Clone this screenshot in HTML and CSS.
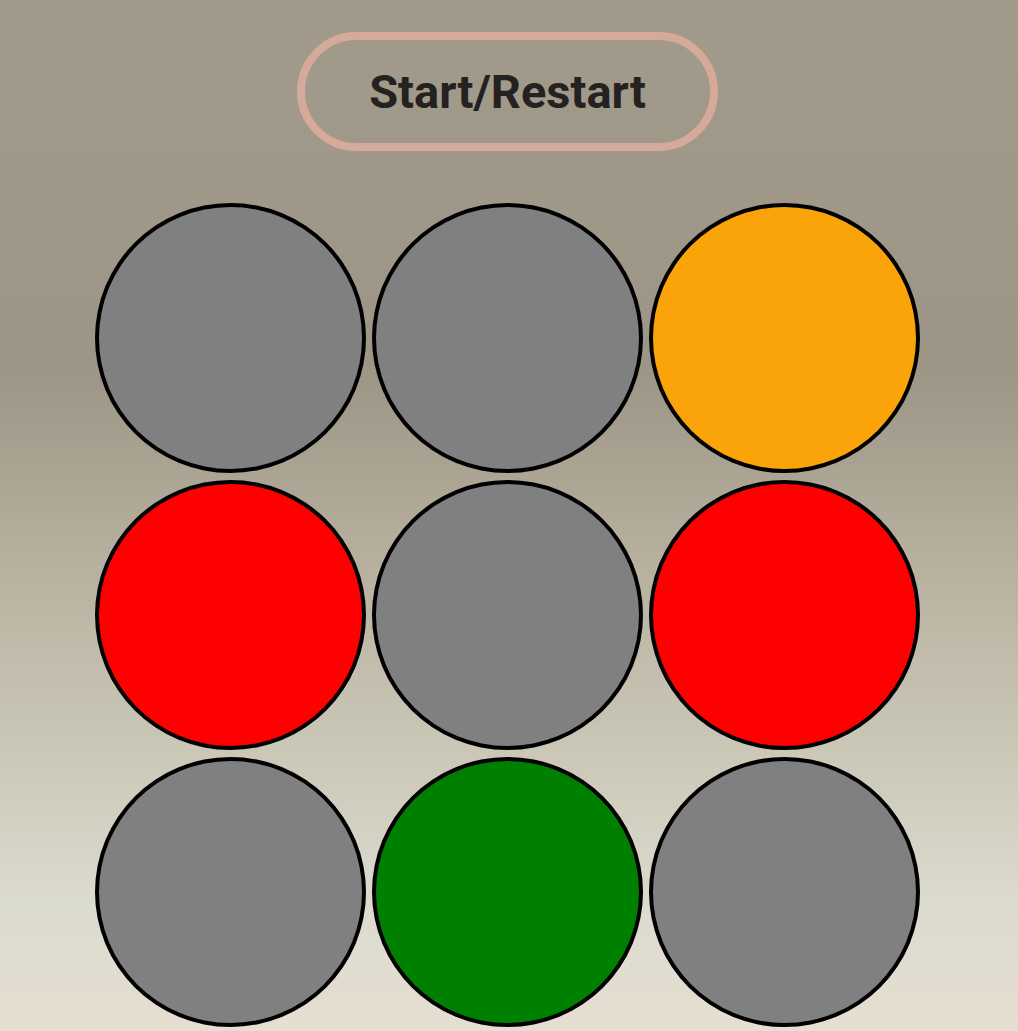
FILE: index.html
```html
<!DOCTYPE html>
<html>
<head>
<meta charset="utf-8">
<link rel="stylesheet" href="styles.css">
</head>
<body>
<main class="game">
  <button class="start-btn">Start/Restart</button>
  <div class="board">
    <div class="light gray"></div>
    <div class="light gray"></div>
    <div class="light orange"></div>
    <div class="light red"></div>
    <div class="light gray"></div>
    <div class="light red"></div>
    <div class="light gray"></div>
    <div class="light green"></div>
    <div class="light gray"></div>
  </div>
</main>
</body>
</html>
```

FILE: styles.css
```css
html, body {
  margin: 0;
  padding: 0;
  height: 100%;
}
body {
  background: linear-gradient(to bottom,
    #a29a8b 0%,
    #9d9585 36%,
    #b2aa99 50%,
    #c8c4b3 70%,
    #dcdbcf 88%,
    #e6ded1 100%);
  font-family: Roboto, "Liberation Sans", sans-serif;
  overflow: hidden;
}
.game {
  display: flex;
  flex-direction: column;
  align-items: center;
  padding-top: 32px;
  padding-right: 3px;
}
.start-btn {
  box-sizing: border-box;
  width: 421px;
  height: 119px;
  border: 8px solid #d5aa9b;
  border-radius: 60px;
  background: transparent;
  color: #242220;
  font-family: Roboto, "Liberation Sans", sans-serif;
  font-weight: 700;
  font-size: 47px;
  padding: 0;
  cursor: pointer;
}
.board {
  margin-top: 52px;
  display: grid;
  grid-template-columns: repeat(3, 271px);
  grid-auto-rows: 270px;
  column-gap: 6px;
  row-gap: 7px;
}
.light {
  box-sizing: border-box;
  border-radius: 50%;
  border: 4px solid #000;
}
.gray { background: #808080; }
.orange { background: #fba40a; }
.red { background: #ff0000; }
.green { background: #008000; }
```
